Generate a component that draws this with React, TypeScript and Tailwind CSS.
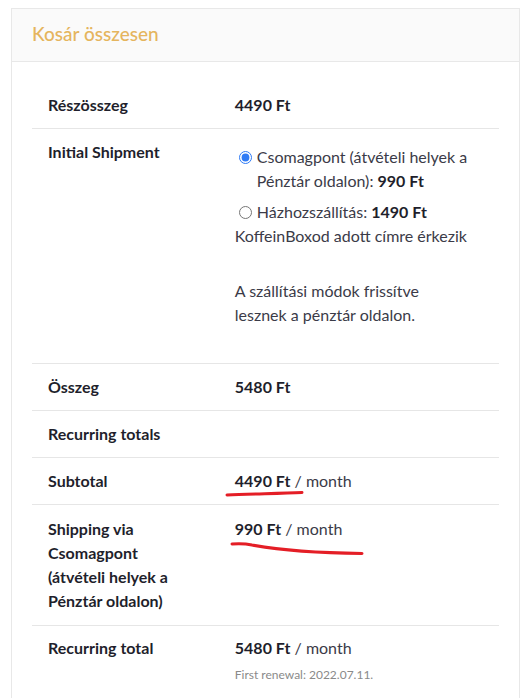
import React from 'react';

const font = { fontFamily: 'Lato, "Open Sans", sans-serif' };

function Row({ label, children }: { label: React.ReactNode; children?: React.ReactNode }) {
  return (
    <div className="flex border-b border-[#e6e6e6]">
      <div className="w-[40%] shrink-0 px-4 py-[11px] text-[16px] font-bold leading-6 text-[#1f1f2c]">{label}</div>
      <div className="relative flex-1 px-4 py-[11px] text-[16px] leading-6 text-[#3b3b48]">{children}</div>
    </div>
  );
}

export default function App() {
  return (
    <div className="min-h-[698px] bg-white pt-2 pl-[11px] pr-[5px]" style={font}>
      <div className="border border-[#e8e8e8]">
        <div className="border-b border-[#e8e8e8] bg-[#fafafa] px-5 pt-[11px] pb-[14px]">
          <h2 className="text-[19px] font-medium leading-[27px] text-[#e5b55e]">Kosár összesen</h2>
        </div>
        <div className="px-5 pt-[20px]">
          <Row label="Részösszeg">
            <span className="font-bold text-[#1f1f2c]">4490 Ft</span>
          </Row>
          <Row label="Initial Shipment">
            <ul className="pt-[5px] pb-[25px]">
              <li className="flex items-start">
                <input type="radio" defaultChecked name="ship" className="mt-[6px] ml-[4px] mr-[5px] h-[13px] w-[13px] shrink-0 accent-[#2f7bf5]" />
                <label>
                  Csomagpont (átvételi helyek a Pénztár oldalon): <span className="font-bold text-[#1f1f2c]">990 Ft</span>
                </label>
              </li>
              <li className="mt-[7px]">
                <div className="flex items-start">
                  <input type="radio" name="ship" className="mt-[6px] ml-[4px] mr-[5px] h-[13px] w-[13px] shrink-0" />
                  <label>
                    Házhozszállítás: <span className="font-bold text-[#1f1f2c]">1490 Ft</span>
                  </label>
                </div>
                <div>KoffeinBoxod adott címre érkezik</div>
              </li>
              <li className="mt-[31px]">
                A szállítási módok frissítve
                <br />
                lesznek a pénztár oldalon.
              </li>
            </ul>
          </Row>
          <Row label="Összeg">
            <span className="font-bold text-[#1f1f2c]">5480 Ft</span>
          </Row>
          <Row label="Recurring totals" />
          <Row label="Subtotal">
            <span className="font-bold text-[#1f1f2c]">4490 Ft</span> / month
            <svg className="pointer-events-none absolute left-0 top-0" width="200" height="60" viewBox="0 0 200 60" fill="none">
              <path d="M8 37 C 30 36, 60 35.5, 83 34.5" stroke="#e41e26" strokeWidth="3" strokeLinecap="round" />
            </svg>
          </Row>
          <div className="flex border-b border-[#e6e6e6]">
            <div className="w-[40%] shrink-0 px-4 pt-[12px] pb-[12px] text-[16px] font-bold leading-6 text-[#1f1f2c]">
              Shipping via<br />Csomagpont<br />(átvételi helyek a<br />Pénztár oldalon)
            </div>
            <div className="relative flex-1 px-4 py-[12px] text-[16px] leading-6 text-[#3b3b48]">
              <span className="font-bold text-[#1f1f2c]">990 Ft</span> / month
              <svg className="pointer-events-none absolute left-0 top-0" width="200" height="60" viewBox="0 0 200 60" fill="none">
                <path d="M13 39 C 20 38.5, 26 38.5, 33 40 C 60 45, 100 48, 143 48.5" stroke="#e41e26" strokeWidth="3" strokeLinecap="round" />
              </svg>
            </div>
          </div>
          <div className="flex border-b border-[#e6e6e6]">
            <div className="w-[40%] shrink-0 px-4 pt-[10px] pb-3 text-[16px] font-bold leading-6 text-[#1f1f2c]">Recurring total</div>
            <div className="flex-1 px-4 pt-[10px] pb-[15px] text-[16px] leading-6 text-[#3b3b48]">
              <div>
                <span className="font-bold text-[#1f1f2c]">5480 Ft</span> / month
              </div>
              <div className="mt-[6px] text-[12px] leading-[17px] text-[#8a8a8a]">First renewal: 2022.07.11.</div>
            </div>
          </div>
        </div>
      </div>
    </div>
  );
}
